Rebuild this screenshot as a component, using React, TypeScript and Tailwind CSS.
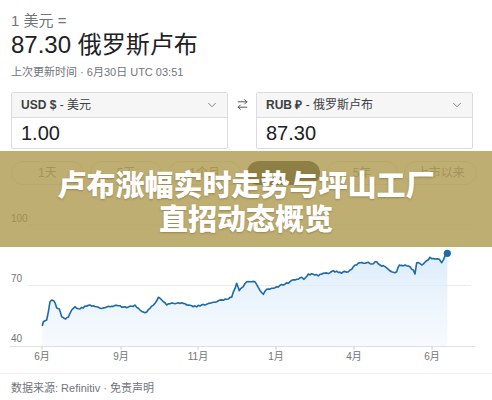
import React from "react";
import { ArrowRightLeft, ChevronDown } from "lucide-react";

const keyPts: [number, number][] = [
  [42.3, 326], [43.3, 321.7], [45, 320.7], [46.7, 320], [50, 301.7], [51.7, 300], [54, 301],
  [56.7, 308], [59.3, 309], [61.7, 316.7], [65.7, 319], [68.3, 317.3], [71.7, 310], [75, 306.7],
  [80, 309], [85, 306], [90, 305], [96.7, 306.7], [100, 308.3], [110, 306.7], [120, 305.7],
  [126.7, 307.7], [135, 305], [140, 310], [145, 312.7], [150, 308.3], [155, 303.3], [158.3, 297.3],
  [161.7, 300], [166.7, 305], [173.3, 303.3], [181.7, 302.7], [186.7, 305], [193.3, 306.7],
  [200, 306], [206.7, 304.3], [216.7, 301.7], [226.7, 299.3], [231.7, 297.3], [236.7, 283.3],
  [239.3, 290.7], [243.3, 286.7], [246.7, 281.7], [250, 281.7], [255, 281.7], [258.3, 287.3],
  [263.3, 294.3], [266.7, 289.3], [271.7, 288.3], [276.7, 286.7], [283.3, 285], [290, 281.7],
  [296.7, 279.3], [301.7, 277.3], [304, 279.3], [308.3, 274], [313.3, 274.3], [318.3, 276],
  [323.3, 273.3], [330, 272.7], [333.3, 270.7], [340, 272.3], [346.7, 272.3], [351.7, 269.3],
  [355, 265], [360, 262.7], [366.7, 262.7], [371.7, 264], [376.7, 261.7], [380, 265], [385, 266.7],
  [388.3, 269.3], [393.3, 272.3], [396.7, 271.7], [399.3, 265], [405, 265], [410, 266.7],
  [413.3, 270], [415, 274], [416.7, 262.7], [421.7, 265], [426.7, 260.7], [430, 257.3], [435, 259],
  [439.3, 259.3], [441.7, 262.7], [445, 255.7], [447.3, 253.3],
];

function buildPoints(): [number, number][] {
  const out: [number, number][] = [];
  let k = 1;
  for (let i = 0; i < keyPts.length - 1; i++) {
    const [x0, y0] = keyPts[i];
    const [x1, y1] = keyPts[i + 1];
    out.push([x0, y0]);
    const steps = Math.max(1, Math.round((x1 - x0) / 1.6));
    for (let s = 1; s < steps; s++) {
      const t = s / steps;
      const h = Math.sin(k * 12.9898) * 43758.5453;
      const n = (h - Math.floor(h) - 0.5) * 1.8;
      k++;
      out.push([x0 + (x1 - x0) * t, y0 + (y1 - y0) * t + n]);
    }
  }
  out.push(keyPts[keyPts.length - 1]);
  return out;
}

const pts = buildPoints();
const linePath = pts.map((p, i) => `${i === 0 ? "M" : "L"}${p[0].toFixed(1)},${p[1].toFixed(1)}`).join(" ");
const areaPath = `${linePath} L447.3,346 L42.3,346 Z`;

const xLabels: [string, number][] = [
  ["6月", 42], ["9月", 121], ["11月", 198], ["1月", 276], ["4月", 354], ["6月", 432],
];

const pills = ["1天", "5天", "1个月", "1年", "5年", "上市以来"];

function Converter({ code, name, value }: { code: string; name: string; value: string }) {
  return (
    <div className="w-[217px] border border-[#dadce0] rounded-[2px] bg-white">
      <div className="h-[25px] bg-[#f6f6f6] border-b border-[#dadce0] flex items-center justify-between pl-[9px] pr-[8px]">
        <span className="text-[12px] text-[#3c4043]">
          <span className="font-bold">{code}</span> - {name}
        </span>
        <ChevronDown size={14} strokeWidth={1.3} color="#5f6368" />
      </div>
      <div className="h-[30px] flex items-center pl-[9px] text-[20px] text-[#202124]">{value}</div>
    </div>
  );
}

export default function App() {
  return (
    <div className="relative w-[492px] h-[400px] overflow-hidden bg-white font-['Liberation_Sans','Noto_Sans_CJK_SC',sans-serif]">
      <div className="pl-[11px] pt-[11px]">
        <div className="text-[15px] leading-[20px] text-[#70757a]">1 美元 =</div>
        <div className="text-[24px] leading-[32px] text-[#202124] -mt-[2px]">87.30 俄罗斯卢布</div>
        <div className="text-[11px] leading-[16px] text-[#70757a] mt-[3px]">上次更新时间 · 6月30日 UTC 03:51</div>
        <div className="flex items-start mt-[12px]">
          <Converter code="USD $" name="美元" value="1.00" />
          <div className="w-[28px] h-[25px] flex items-center justify-center">
            <ArrowRightLeft size={13} strokeWidth={1.6} color="#3c4043" />
          </div>
          <Converter code="RUB ₽" name="俄罗斯卢布" value="87.30" />
        </div>
        <div className="grid grid-cols-6 gap-[6px] mt-[12px] w-[466px]">
          {pills.map((p, i) => (
            <div
              key={p}
              className={
                i === 3
                  ? "h-[24px] rounded-full bg-[#32373e] text-[#32373e] text-[12px] flex items-center justify-center"
                  : "h-[24px] rounded-full border border-[#e3e3e3] text-[#8a8f95] text-[12px] flex items-center justify-center"
              }
            >
              {p}
            </div>
          ))}
        </div>
      </div>
      <svg width="492" height="183" viewBox="0 185 492 183" className="block">
        <defs>
          <linearGradient id="fillg" x1="0" y1="250" x2="0" y2="346" gradientUnits="userSpaceOnUse">
            <stop offset="0" stopColor="#d6e9fa" stopOpacity="0.9" />
            <stop offset="1" stopColor="#eef5fc" stopOpacity="0.5" />
          </linearGradient>
        </defs>
        <line x1="28" y1="225" x2="471" y2="225" stroke="#ebebeb" strokeWidth="1" />
        <line x1="28" y1="285.5" x2="471" y2="285.5" stroke="#ebebeb" strokeWidth="1" />
        <path d={areaPath} fill="url(#fillg)" />
        <line x1="10" y1="346.5" x2="475" y2="346.5" stroke="#e0e0e0" strokeWidth="1.2" />
        {xLabels.map(([t, x], i) => (
          <g key={i}>
            <line x1={x} y1="346" x2={x} y2="350" stroke="#d0d0d0" strokeWidth="1" />
            <text x={x} y="359.5" textAnchor="middle" fontSize="10" fill="#70757a" fontFamily="Liberation Sans, Noto Sans CJK SC, sans-serif">{t}</text>
          </g>
        ))}
        <text x="11" y="222" fontSize="10" fill="#70757a" fontFamily="Liberation Sans, sans-serif">100</text>
        <text x="11" y="282" fontSize="10" fill="#70757a" fontFamily="Liberation Sans, sans-serif">70</text>
        <text x="11" y="342" fontSize="10" fill="#70757a" fontFamily="Liberation Sans, sans-serif">40</text>
        <path d={linePath} fill="none" stroke="#1c6aa8" strokeWidth="1.6" strokeLinejoin="round" />
        <circle cx="447.3" cy="253.3" r="3.6" fill="#1c6aa8" />
      </svg>
      <div className="border-t border-[#efefef] mt-[5px] pl-[11px] pt-[6px] text-[11px] leading-[16px] text-[#70757a]">
        数据来源: Refinitiv · 免责声明
      </div>

      <div className="absolute left-0 top-[151px] w-full h-[96px] bg-[rgba(171,149,71,0.77)] flex flex-col items-center justify-center pt-[2px]">
        <div className="font-['Noto_Sans_CJK_SC',sans-serif] font-black text-white text-[29px] leading-[34px] [text-shadow:0_1px_2px_rgba(80,60,20,0.35)]">
          卢布涨幅实时走势与坪山工厂
        </div>
        <div className="font-['Noto_Sans_CJK_SC',sans-serif] font-black text-white text-[29px] leading-[34px] [text-shadow:0_1px_2px_rgba(80,60,20,0.35)]">
          直招动态概览
        </div>
      </div>
    </div>
  );
}
